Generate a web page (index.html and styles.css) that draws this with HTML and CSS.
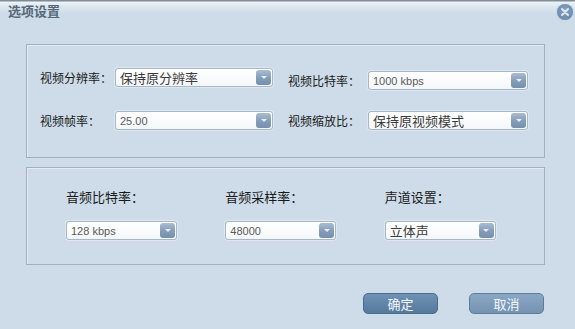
FILE: index.html
```html
<!DOCTYPE html>
<html lang="zh-CN">
<head>
  <meta charset="utf-8" />
  <title>选项设置</title>
  <link rel="stylesheet" href="styles.css">
</head>
<body>
  <div id="dialog">
    <div class="titlebar">
      <h1>选项设置</h1>
      <span class="close-btn">
        <svg width="10" height="10" viewBox="0 0 10 10"><path d="M2 2 L8 8 M8 2 L2 8" stroke="#dfe8f1" stroke-width="2" stroke-linecap="round"/></svg>
      </span>
    </div>

    <!-- video settings -->
    <div class="panel video-panel">
      <span class="label">视频分辨率：</span>
      <div class="select"><span class="value cn">保持原分辨率</span><span class="drop"></span></div>
      <span class="label col2 shifted">视频比特率：</span>
      <div class="select wide shifted"><span class="value">1000 kbps</span><span class="drop"></span></div>
      <span class="label">视频帧率：</span>
      <div class="select"><span class="value">25.00</span><span class="drop"></span></div>
      <span class="label col2">视频缩放比：</span>
      <div class="select wide"><span class="value cn">保持原视频模式</span><span class="drop"></span></div>
    </div>

    <!-- audio settings -->
    <div class="panel audio-panel">
      <div class="audio-col">
        <span class="label">音频比特率：</span>
        <div class="select small"><span class="value">128 kbps</span><span class="drop"></span></div>
      </div>
      <div class="audio-col">
        <span class="label">音频采样率：</span>
        <div class="select small"><span class="value">48000</span><span class="drop"></span></div>
      </div>
      <div class="audio-col">
        <span class="label">声道设置：</span>
        <div class="select small"><span class="value cn">立体声</span><span class="drop"></span></div>
      </div>
    </div>

    <div class="footer">
      <button type="button" class="btn primary">确定</button>
      <button type="button" class="btn">取消</button>
    </div>
  </div>
</body>
</html>
```

FILE: styles.css
```css
body {
  margin: 0;
  font-family: "Noto Sans CJK SC", "Liberation Sans", sans-serif;
  font-size: 12px;
  color: #1e1e1e;
  background-color: #cddce8;
}
#dialog {
  width: 575px;
  height: 329px;
  overflow: hidden;
  background: linear-gradient(#7d8c98 0, #7d8c98 1px, #eef3f7 2px, #dbe6ee 7px, #cddce8 14px);
}
.titlebar {
  display: flex;
  justify-content: space-between;
  align-items: flex-start;
  height: 44px;
  padding: 3px 2px 0 8px;
  box-sizing: border-box;
}
.titlebar h1 {
  margin: 0;
  font-size: 13px;
  line-height: 16px;
  font-weight: bold;
  color: #56687a;
}
.close-btn {
  display: flex;
  align-items: center;
  justify-content: center;
  width: 16px;
  height: 16px;
  margin-top: 1px;
  border-radius: 50%;
  background: radial-gradient(circle at 50% 40%, #83a0bf, #6485a8);
  box-shadow: 0 0 1px #8aa0b6;
}
.panel {
  margin-left: 26px;
  width: 519px;
  box-sizing: border-box;
  border: 1px solid #9fb0c0;
  box-shadow: inset 1px 1px 0 #e2ebf2;
}
.video-panel {
  height: 114px;
  display: grid;
  grid-template-columns: 75px 158px 95px 160px;
  grid-template-rows: 19px 19px;
  row-gap: 24px;
  align-items: center;
  padding: 23px 0 0 13px;
}
.video-panel .col2 {
  margin-left: 15px;
}
.label {
  font-size: 12px;
  line-height: 14px;
  color: #1a1a1a;
  white-space: nowrap;
}
.shifted {
  position: relative;
  top: 3px;
}
.select {
  display: flex;
  align-items: center;
  justify-content: space-between;
  height: 19px;
  box-sizing: border-box;
  border: 1px solid #a7b7c6;
  border-radius: 3px;
  background: linear-gradient(#ffffff, #f4f7f9);
  box-shadow: 0 0 0 1px #dde7ef;
  padding: 0 1px 0 4px;
}
.select .value {
  font-family: "Liberation Sans", "Noto Sans CJK SC", sans-serif;
  font-size: 11px;
  color: #5a5a5a;
}
.select .value.cn {
  font-family: "Noto Sans CJK SC", sans-serif;
  font-size: 13px;
  color: #3a3a3a;
}
.drop {
  width: 15px;
  height: 15px;
  border-radius: 3px;
  background: linear-gradient(#a9bdd1, #829cb8 55%, #7590ae);
  display: flex;
  align-items: center;
  justify-content: center;
}
.drop::after {
  content: "";
  border-left: 3px solid transparent;
  border-right: 3px solid transparent;
  border-top: 3px solid #e8eef4;
}
.audio-panel {
  margin-top: 9px;
  height: 98px;
  display: flex;
  padding: 22px 0 0 39px;
}
.audio-col {
  display: flex;
  flex-direction: column;
  width: 160px;
}
.audio-col .label {
  font-size: 13px;
  margin-bottom: 17px;
}
.select.small {
  width: 111px;
}
.footer {
  display: flex;
  justify-content: flex-end;
  gap: 31px;
  padding: 28px 31px 0 0;
}
.btn {
  width: 75px;
  height: 21px;
  padding: 0;
  border: 1px solid #5c7d9e;
  border-radius: 5px;
  font-family: "Noto Sans CJK SC", sans-serif;
  font-size: 13px;
  line-height: 18px;
  color: #f4f8fb;
  background: linear-gradient(#8aa7c4, #7592b2);
}
.btn.primary {
  border-color: #4c6d8f;
  background: linear-gradient(#6f92b4, #55799d);
}
```
